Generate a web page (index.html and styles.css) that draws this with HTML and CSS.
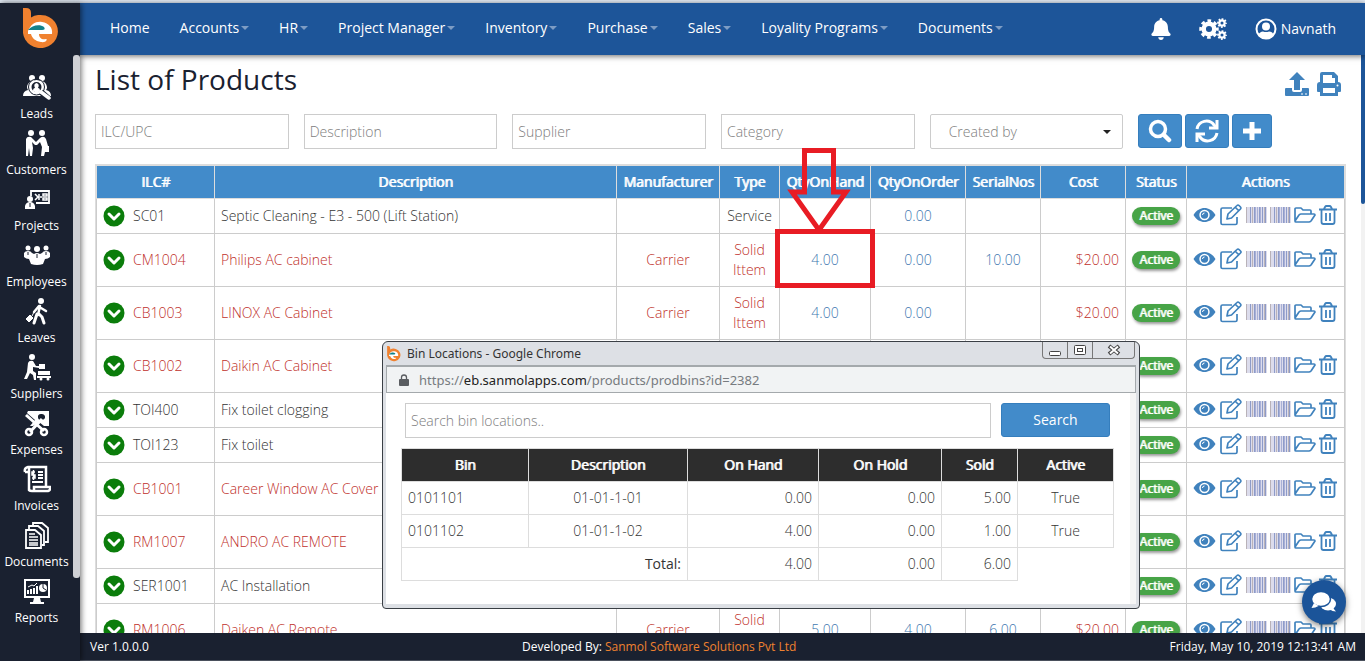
FILE: index.html
```
<!DOCTYPE html>
<html lang="en">
<head>
<meta charset="utf-8">
<title>List of Products</title>
<link rel="stylesheet" href="styles.css">
</head>
<body>
<svg class="sprite" aria-hidden="true">
  <symbol id="logo" viewBox="0 0 36 42">
    <path fill="#f0812f" d="M0 0h3q5 0 5 5v4.500A17.500 16.500 0 1 1 0 25z"/>
    <path fill="#fff" fill-rule="evenodd" d="M5 23C8 16 13 13 19 14C26 15 30 20 29 26H16C16 30 19 32 23 31C25 31 23 35 18 34C12 33 9 30 8 26H5z"/>
    <path fill="#12818a" d="M5 22C9 17 17 16 21 19Q23 22 19 22z"/>
  </symbol>
  <symbol id="check" viewBox="0 0 22 22"><circle cx="11" cy="11" r="10.500" fill="#0b7d0b"/><path d="M6 9l5 5 5-5" fill="none" stroke="#fff" stroke-width="3" stroke-linecap="round" stroke-linejoin="round"/></symbol>
  <symbol id="eye" viewBox="0 0 22 16"><path fill="currentColor" fill-rule="evenodd" d="M0 8C3 3 7 1 11 1s8 2 11 7c-3 5-7 7-11 7S3 13 0 8zM11 2.800a5.200 5.200 0 1 0 0 10.400a5.200 5.200 0 1 0 0-10.400z"/><circle cx="11" cy="8" r="3.700" fill="currentColor"/><path d="M9 8q0-2 2-2" stroke="#fff" fill="none"/></symbol>
  <symbol id="edit" viewBox="0 0 22 22"><g fill="none" stroke="currentColor" stroke-width="1.700" stroke-linejoin="round"><path d="M12 4H2.500q-1.500 0-1.500 1.500v13.500q0 1.500 1.500 1.500h13q1.500 0 1.500-1.500v-6"/><path d="M7 15l1-5 9-8.500q1-1 2 0l1.500 1.500q1 1 0 2l-9 9zM15.500 3.500l3.500 3.500"/></g></symbol>
  <symbol id="barcode" viewBox="0 0 21 16"><path fill="#dcdcec" d="M0 0h21v16H0z"/><g stroke="#8d9bc9"><path d="M4.500 0v16M8.500 0v16M13.500 0v16M16.500 0v16M19.500 0v16"/><path stroke="#b9b2b8" d="M.5 0v16M6.500 0v16M18.500 0v16"/><path stroke="#a9b0d6" d="M9.500 0v16M11.500 0v16M14.500 0v16"/></g></symbol>
  <symbol id="folder" viewBox="0 0 22 18"><path fill="none" stroke="currentColor" stroke-width="1.700" stroke-linejoin="round" d="M1 15V3q0-1 1-1h5l2 2h7q1 0 1 1v3M1 15q0 1 1 1h13q1 0 2-1l4-6q0-1-1-1H7q-1 0-2 1z"/></symbol>
  <symbol id="trash" viewBox="0 0 18 20"><path fill="none" stroke="currentColor" stroke-width="1.800" d="M0 4.500h18M2.500 5v12q0 2 2 2h9q2 0 2-2V5M5 4l1-2q.5-1 1.500-1h3q1 0 1.500 1l1 2M7 8v8M11 8v8"/></symbol>
  <symbol id="gear" viewBox="-10 -10 20 20"><circle r="5.300" fill="none" stroke="currentColor" stroke-width="4.500"/><circle r="8" fill="none" stroke="currentColor" stroke-width="3.500" stroke-dasharray="3.500 2.783" stroke-dashoffset="1.750"/></symbol>
  <symbol id="caret" viewBox="0 0 8 4"><path fill="currentColor" d="M0 0h8L4 4z"/></symbol>
</svg>

<div class="app">
  <aside class="sidebar">
    <a class="brand" href="#" aria-label="Home page"><svg><use href="#logo"/></svg></a>
    <nav class="side-scroll" aria-label="Modules">
      <a class="side-link" href="#"><svg viewBox="0 0 28 28"><g fill="currentColor"><circle cx="9" cy="5" r="3"/><circle cx="19" cy="5" r="3"/><path d="M0 23q0-5 5-6-2-3 0-6 1-2 4-3h10q3 1 4 3 2 4 0 6 5 1 5 6H1z"/></g><circle cx="13.500" cy="14" r="6" fill="#1a2130" stroke="#fff" stroke-width="2"/><path d="M10 18q0-3 2-3-2-4 1.500-5 3.500 1 1.500 5 2 0 2 3l-3 2z" fill="currentColor"/><circle cx="13.500" cy="14" r="8" fill="none" stroke="#1a2130" stroke-width="1"/><path d="M18 19l8 7" stroke="#1a2130" stroke-width="6"/><path d="M18 19l8 6" stroke="currentColor" stroke-width="3.500" stroke-linecap="round"/></svg>Leads</a>
      <a class="side-link" href="#"><svg viewBox="0 0 28 28"><g fill="currentColor"><circle cx="8" cy="4" r="3"/><circle cx="19" cy="4" r="3"/><path d="M3 10q1-3 5-2l5 5 4-4q4-3 6 1l2 7h1v6h-4l-1 4h-3l1-9-2-5-3 3h-2L9 13l1 6-1 8H7l-1-8-1 8H3V15z"/></g></svg>Customers</a>
      <a class="side-link" href="#"><svg viewBox="0 0 28 28"><g fill="none" stroke="currentColor"><path stroke-width="1.800" d="M8 11V6h18v12H13"/><path stroke-width="1.500" d="M12 9l3 3-3 3M17 12h2M20 9h4v2h-4zM20 13h4v2h-4zM16 9v6"/></g><circle cx="7" cy="14" r="3" fill="currentColor"/><path fill="currentColor" d="M2 24v-3q1-4 5-4t5 4v3z"/><path d="M7 18v4" stroke="#1a2130"/></svg>Projects</a>
      <a class="side-link" href="#"><svg viewBox="0 0 28 28"><g fill="currentColor"><circle cx="5" cy="7" r="2.500"/><circle cx="14" cy="8" r="3"/><circle cx="23" cy="7" r="2.500"/><path d="M1 12q1-2 4-2t4 2l2 1q3-2 6 0l2-1q1-2 4-2t4 2v4q-2 2-5 2l-2 5q-6 2-12 0l-2-5q-3 0-5-2z"/></g><path d="M14 13v4M5 11v3M23 11v3" stroke="#1a2130"/></svg>Employees</a>
      <a class="side-link" href="#"><svg viewBox="0 0 28 28"><circle cx="18" cy="4" r="3" fill="currentColor"/><path d="M17 9l-2 9M16 9l-5 6M18 11l5 3" fill="none" stroke="currentColor" stroke-width="2.500" stroke-linecap="round"/><path d="M14 17l-3 9M16 17l3 3 2 6" fill="none" stroke="currentColor" stroke-width="3" stroke-linecap="round" stroke-linejoin="round"/><path d="M3 22l4-4 3 3-4 4zM9 19l2-4" fill="currentColor" stroke="currentColor"/></svg>Leaves</a>
      <a class="side-link" href="#"><svg viewBox="0 0 28 28"><g fill="currentColor"><circle cx="9" cy="4" r="3"/><path d="M5 10q1-3 5-2l3 5h3v2l-6-1v4l3 2v7h-2l-1-5-3-2-3 6H1l3-7zM16 11h6v5h-6zM15 18h12v4H15z"/></g><path d="M14 24h14" stroke="currentColor" stroke-width="2"/><circle cx="18" cy="26" r="1.500" fill="currentColor"/><circle cx="25" cy="26" r="1.500" fill="currentColor"/></svg>Suppliers</a>
      <a class="side-link" href="#"><svg viewBox="0 0 28 28"><path fill="currentColor" fill-rule="evenodd" d="M5 2h21v15h-5l-5-4-6 4H7l5-6-8-7zM18 5a3.500 3 0 1 0 1 6 3.500 3 0 0 0-1-6z"/><path d="M3 6l18 16M19 10L7 23" stroke="currentColor" stroke-width="3"/><g fill="none" stroke="currentColor" stroke-width="2.500"><circle cx="6" cy="23" r="3"/><circle cx="21" cy="23" r="3"/></g></svg>Expenses</a>
      <a class="side-link" href="#"><svg viewBox="0 0 28 28"><g fill="none" stroke="currentColor" stroke-width="2"><path d="M2 7q-1-4 3-5h18v20M6 3v22q1 1 3 1h16q3-1 2-4H11v3M2 7h4" stroke-width="2.500"/><path d="M15 7h5M15 10h5M15 13h5M9 17h11"/><path stroke-width="1.500" d="M12 7H9v3h3v3H9M10.500 5v10"/></g></svg>Invoices</a>
      <a class="side-link" href="#"><svg viewBox="0 0 28 28"><g fill="none" stroke="currentColor" stroke-width="1.800"><path d="M3 9h9l6 5v13H3z"/><path d="M6 8V5h9l6 5v14h-2M10 4V2h9l6 5v14h-3"/><path stroke-width="1.500" d="M6 13h6M6 16h9M6 19h9M6 22h9M6 24h9"/></g></svg>Documents</a>
      <a class="side-link" href="#"><svg viewBox="0 0 28 28"><path fill="none" stroke="currentColor" stroke-width="2" d="M2 3h24v17H2z"/><path fill="currentColor" d="M11 21h6l1 4h3v2H7v-2h3z"/><circle cx="20" cy="11" r="4" fill="currentColor"/><path d="M20 7v4l3 2" stroke="#1a2130" fill="none"/><path d="M5 17v-4M8 17v-5M11 17v-6M14 17V9" stroke="currentColor" stroke-width="2"/><path d="M5 10l4-2 2 1 3-3" stroke="currentColor" fill="none"/></svg>Reports</a>
    </nav>
  </aside>

  <header class="topbar">
    <nav class="menu" aria-label="Main">
      <a href="#">Home</a>
      <a href="#">Accounts<svg><use href="#caret"/></svg></a>
      <a href="#">HR<svg><use href="#caret"/></svg></a>
      <a href="#">Project Manager<svg><use href="#caret"/></svg></a>
      <a href="#">Inventory<svg><use href="#caret"/></svg></a>
      <a href="#">Purchase<svg><use href="#caret"/></svg></a>
      <a href="#">Sales<svg><use href="#caret"/></svg></a>
      <a href="#">Loyality Programs<svg><use href="#caret"/></svg></a>
      <a href="#">Documents<svg><use href="#caret"/></svg></a>
    </nav>
    <div class="account">
      <button class="plain" aria-label="Notifications"><svg class="i-bell" viewBox="0 0 448 512"><path fill="currentColor" d="M224 512c35 0 64-29 64-64H160c0 35 29 64 64 64zm215-150c-19-20-55-52-55-154 0-78-54-140-128-155V32c0-18-14-32-32-32s-32 14-32 32v21C118 68 64 130 64 208c0 102-36 134-55 154-6 7-9 14-9 22 0 16 13 32 32 32h384c19 0 32-16 32-32 0-8-3-15-9-22z"/></svg></button>
      <button class="plain" aria-label="Settings"><svg class="i-cogs" viewBox="0 0 28 22"><use href="#gear" x="0" y="1" width="20" height="20"/><use href="#gear" x="18" y="0" width="10" height="10"/><use href="#gear" x="18" y="12" width="10" height="10"/></svg></button>
      <button class="plain user"><svg viewBox="0 0 22 22"><circle cx="11" cy="11" r="9.500" fill="none" stroke="currentColor" stroke-width="2"/><circle cx="11" cy="8.500" r="4" fill="currentColor"/><path fill="currentColor" d="M3 17q2-3.500 5-3.500q3 1 6 0 3 0 5 3.500-3 4-8 4t-8-4z"/></svg>Navnath</button>
    </div>
  </header>

  <main class="content">
    <div class="title-row">
      <h1>List of Products</h1>
      <div class="tools">
        <button class="plain" aria-label="Upload"><svg viewBox="0 0 24 24"><path fill="currentColor" d="M12 0l8 8h-5v10H9V8H4z"/><path fill="currentColor" d="M1 16h6v2q0 2 2 2h6q2 0 2-2v-2h6q1 0 1 1v6q0 1-1 1H1q-1 0-1-1v-6q0-1 1-1z"/><path d="M16 22h2M20 22h2" stroke="#fff"/></svg></button>
        <button class="plain" aria-label="Print"><svg viewBox="0 0 24 24"><path fill="currentColor" fill-rule="evenodd" d="M3 2q0-2 2-2h12l4 4v6q3 0 3 3v6q0 1-1 1h-2v4H3v-4H1q-1 0-1-1v-6q0-3 3-3zM6 3v8h12V6h-3V3zM6 16v5h12v-5z"/><circle cx="20.500" cy="13.500" r="1" fill="#fff"/></svg></button>
      </div>
    </div>
    <form class="filters">
      <input type="text" placeholder="ILC/UPC" aria-label="ILC/UPC">
      <input type="text" placeholder="Description" aria-label="Description">
      <input type="text" placeholder="Supplier" aria-label="Supplier">
      <input type="text" placeholder="Category" aria-label="Category">
      <div class="select"><select aria-label="Created by"><option>Created by</option></select><svg><use href="#caret"/></svg></div>
      <div class="buttons">
        <button type="button" class="btn" aria-label="Search"><svg viewBox="0 0 24 24"><circle cx="10" cy="10" r="7.500" fill="none" stroke="currentColor" stroke-width="3.500"/><path d="M16 16l5 5" stroke="currentColor" stroke-width="4.500" stroke-linecap="round"/></svg></button>
        <button type="button" class="btn" aria-label="Refresh"><svg viewBox="0 0 24 24"><g fill="none" stroke="currentColor" stroke-width="3"><path d="M2 10A9.500 9.500 0 0 1 19 6l2 2M22 14A9.500 9.500 0 0 1 5 18l-2-2"/><path d="M22 1v8h-8M2 23v-8h8"/></g></svg></button>
        <button type="button" class="btn" aria-label="Add"><svg class="i-plus" viewBox="0 0 20 20"><path d="M10 1v18M1 10h18" stroke="currentColor" stroke-width="5"/></svg></button>
      </div>
    </form>

    <table class="products">
      <colgroup><col class="w-ilc"><col><col class="w-man"><col class="w-type"><col class="w-hand"><col class="w-order"><col class="w-serial"><col class="w-cost"><col class="w-status"><col class="w-actions"></colgroup>
      <thead><tr><th>ILC#</th><th>Description</th><th>Manufacturer</th><th>Type</th><th>QtyOnHand</th><th>QtyOnOrder</th><th>SerialNos</th><th>Cost</th><th>Status</th><th>Actions</th></tr></thead>
      <tbody>
        <tr><td><div class="ilc"><svg><use href="#check"/></svg>SC01</div></td><td>Septic Cleaning - E3 - 500 (Lift Station)</td><td></td><td class="mid">Service</td><td></td><td class="mid"><a href="#">0.00</a></td><td></td><td></td><td><span class="badge">Active</span></td><td><div class="actions"><svg class="i-eye"><use href="#eye"/></svg><svg class="i-edit"><use href="#edit"/></svg><svg class="i-bar"><use href="#barcode"/></svg><svg class="i-bar"><use href="#barcode"/></svg><svg class="i-folder"><use href="#folder"/></svg><svg class="i-trash"><use href="#trash"/></svg></div></td></tr>
        <tr class="solid"><td><div class="ilc"><svg><use href="#check"/></svg>CM1004</div></td><td>Philips AC cabinet</td><td class="mid">Carrier</td><td class="mid">Solid Ittem</td><td class="mid marked"><a href="#">4.00</a><span class="mark"><svg class="arrow" viewBox="0 0 64 87"><path fill="none" stroke="#e81c24" stroke-width="5" d="M17.500 45V3.500h29V45H59L32 83 5 45z"/></svg></span></td><td class="mid"><a href="#">0.00</a></td><td class="mid"><a href="#">10.00</a></td><td class="end">$20.00</td><td><span class="badge">Active</span></td><td><div class="actions"><svg class="i-eye"><use href="#eye"/></svg><svg class="i-edit"><use href="#edit"/></svg><svg class="i-bar"><use href="#barcode"/></svg><svg class="i-bar"><use href="#barcode"/></svg><svg class="i-folder"><use href="#folder"/></svg><svg class="i-trash"><use href="#trash"/></svg></div></td></tr>
        <tr class="solid"><td><div class="ilc"><svg><use href="#check"/></svg>CB1003</div></td><td>LINOX AC Cabinet</td><td class="mid">Carrier</td><td class="mid">Solid Ittem</td><td class="mid"><a href="#">4.00</a></td><td class="mid"><a href="#">0.00</a></td><td></td><td class="end">$20.00</td><td><span class="badge">Active</span></td><td><div class="actions"><svg class="i-eye"><use href="#eye"/></svg><svg class="i-edit"><use href="#edit"/></svg><svg class="i-bar"><use href="#barcode"/></svg><svg class="i-bar"><use href="#barcode"/></svg><svg class="i-folder"><use href="#folder"/></svg><svg class="i-trash"><use href="#trash"/></svg></div></td></tr>
        <tr class="solid"><td><div class="ilc"><svg><use href="#check"/></svg>CB1002</div></td><td>Daikin AC Cabinet</td><td></td><td></td><td></td><td></td><td></td><td></td><td><span class="badge">Active</span></td><td><div class="actions"><svg class="i-eye"><use href="#eye"/></svg><svg class="i-edit"><use href="#edit"/></svg><svg class="i-bar"><use href="#barcode"/></svg><svg class="i-bar"><use href="#barcode"/></svg><svg class="i-folder"><use href="#folder"/></svg><svg class="i-trash"><use href="#trash"/></svg></div></td></tr>
        <tr><td><div class="ilc"><svg><use href="#check"/></svg>TOI400</div></td><td>Fix toilet clogging</td><td></td><td></td><td></td><td></td><td></td><td></td><td><span class="badge">Active</span></td><td><div class="actions"><svg class="i-eye"><use href="#eye"/></svg><svg class="i-edit"><use href="#edit"/></svg><svg class="i-bar"><use href="#barcode"/></svg><svg class="i-bar"><use href="#barcode"/></svg><svg class="i-folder"><use href="#folder"/></svg><svg class="i-trash"><use href="#trash"/></svg></div></td></tr>
        <tr><td><div class="ilc"><svg><use href="#check"/></svg>TOI123</div></td><td>Fix toilet</td><td></td><td></td><td></td><td></td><td></td><td></td><td><span class="badge">Active</span></td><td><div class="actions"><svg class="i-eye"><use href="#eye"/></svg><svg class="i-edit"><use href="#edit"/></svg><svg class="i-bar"><use href="#barcode"/></svg><svg class="i-bar"><use href="#barcode"/></svg><svg class="i-folder"><use href="#folder"/></svg><svg class="i-trash"><use href="#trash"/></svg></div></td></tr>
        <tr class="solid"><td><div class="ilc"><svg><use href="#check"/></svg>CB1001</div></td><td>Career Window AC Cover</td><td></td><td></td><td></td><td></td><td></td><td></td><td><span class="badge">Active</span></td><td><div class="actions"><svg class="i-eye"><use href="#eye"/></svg><svg class="i-edit"><use href="#edit"/></svg><svg class="i-bar"><use href="#barcode"/></svg><svg class="i-bar"><use href="#barcode"/></svg><svg class="i-folder"><use href="#folder"/></svg><svg class="i-trash"><use href="#trash"/></svg></div></td></tr>
        <tr class="solid"><td><div class="ilc"><svg><use href="#check"/></svg>RM1007</div></td><td>ANDRO AC REMOTE</td><td></td><td></td><td></td><td></td><td></td><td></td><td><span class="badge">Active</span></td><td><div class="actions"><svg class="i-eye"><use href="#eye"/></svg><svg class="i-edit"><use href="#edit"/></svg><svg class="i-bar"><use href="#barcode"/></svg><svg class="i-bar"><use href="#barcode"/></svg><svg class="i-folder"><use href="#folder"/></svg><svg class="i-trash"><use href="#trash"/></svg></div></td></tr>
        <tr><td><div class="ilc"><svg><use href="#check"/></svg>SER1001</div></td><td>AC Installation</td><td></td><td></td><td></td><td></td><td></td><td></td><td><span class="badge">Active</span></td><td><div class="actions"><svg class="i-eye"><use href="#eye"/></svg><svg class="i-edit"><use href="#edit"/></svg><svg class="i-bar"><use href="#barcode"/></svg><svg class="i-bar"><use href="#barcode"/></svg><svg class="i-folder"><use href="#folder"/></svg><svg class="i-trash"><use href="#trash"/></svg></div></td></tr>
        <tr class="solid"><td><div class="ilc"><svg><use href="#check"/></svg>RM1006</div></td><td>Daiken AC Remote</td><td class="mid">Carrier</td><td class="mid">Solid Ittem</td><td class="mid"><a href="#">5.00</a></td><td class="mid"><a href="#">4.00</a></td><td class="mid"><a href="#">6.00</a></td><td class="end">$20.00</td><td><span class="badge">Active</span></td><td><div class="actions"><svg class="i-eye"><use href="#eye"/></svg><svg class="i-edit"><use href="#edit"/></svg><svg class="i-bar"><use href="#barcode"/></svg><svg class="i-bar"><use href="#barcode"/></svg><svg class="i-folder"><use href="#folder"/></svg><svg class="i-trash"><use href="#trash"/></svg></div></td></tr>
      </tbody>
    </table>
  </main>

  <footer class="footer">
    <span>Ver 1.0.0.0</span>
    <span>Developed By: <a href="#">Sanmol Software Solutions Pvt Ltd</a></span>
    <span>Friday, May 10, 2019 12:13:41 AM</span>
  </footer>
</div>

<section class="popup" aria-label="Bin Locations">
  <div class="popup-title">
    <svg class="i-logo"><use href="#logo"/></svg><span>Bin Locations - Google Chrome</span>
    <div class="win-buttons">
      <button aria-label="Minimize"><svg viewBox="0 0 14 12"><rect x="1.500" y="7.500" width="11" height="4" rx="1" fill="#fff" stroke="#444"/></svg></button>
      <button aria-label="Maximize"><svg viewBox="0 0 14 12"><rect x="1.500" y="1.500" width="11" height="9" rx="1" fill="#fff" stroke="#444"/><rect x="4.500" y="4.500" width="5" height="3" fill="#fff" stroke="#444"/></svg></button>
      <button class="close" aria-label="Close"><svg viewBox="0 0 14 12"><path d="M2 2l10 8M12 2L2 10" stroke="#444" stroke-width="4"/><path d="M3 2.500l8 7M11 2.500l-8 7" stroke="#fff" stroke-width="2"/></svg></button>
    </div>
  </div>
  <div class="address"><svg viewBox="0 0 10 12"><path fill="#5a5d61" d="M1 5h8q1 0 1 1v5q0 1-1 1H1q-1 0-1-1V6q0-1 1-1z"/><path d="M2.500 5V3.500a2.500 2.500 0 0 1 5 0V5" fill="none" stroke="#5a5d61" stroke-width="1.300"/></svg><span>https://<b>eb.sanmolapps.com</b>/products/prodbins?id=2382</span></div>
  <div class="popup-body">
    <form class="bin-search">
      <input type="text" placeholder="Search bin locations.." aria-label="Search bin locations">
      <button type="button" class="btn">Search</button>
    </form>
    <table class="bins">
      <colgroup><col class="b-bin"><col><col class="b-hand"><col class="b-hold"><col class="b-sold"><col class="b-active"></colgroup>
      <thead><tr><th>Bin</th><th>Description</th><th>On Hand</th><th>On Hold</th><th>Sold</th><th>Active</th></tr></thead>
      <tbody>
        <tr><td>0101101</td><td class="mid">01-01-1-01</td><td class="end">0.00</td><td class="end">0.00</td><td class="end">5.00</td><td class="mid">True</td></tr>
        <tr><td>0101102</td><td class="mid">01-01-1-02</td><td class="end">4.00</td><td class="end">0.00</td><td class="end">1.00</td><td class="mid">True</td></tr>
        <tr><td class="end total" colspan="2">Total:</td><td class="end">4.00</td><td class="end">0.00</td><td class="end">6.00</td><td class="blank"></td></tr>
      </tbody>
    </table>
  </div>
</section>
<button class="chat" aria-label="Chat"><svg viewBox="0 0 26 22"><ellipse cx="17" cy="13" rx="8" ry="6.500" fill="currentColor"/><path fill="currentColor" d="M22 17l3 3.500q-4 0-6-2z"/><ellipse cx="10" cy="8" rx="9.500" ry="7.500" fill="currentColor" stroke="#1b5499" stroke-width="1.500"/><path fill="currentColor" d="M3 12l-2.500 5q4 0 7-2z"/></svg></button>
</body>
</html>
```
FILE: styles.css
```
* { box-sizing: border-box; }
body { margin: 0; height: 100vh; overflow: hidden; background: #fff; color: #333; font: 300 14px/20px "Open Sans", "Noto Sans", sans-serif; }
a { color: #4178b0; text-decoration: none; }
button, input, select { font: inherit; color: inherit; margin: 0; }
svg { display: block; flex: none; }
.sprite { position: absolute; width: 0; height: 0; }

.app { display: grid; grid-template: 52px 1fr 28px / 80px 1fr; height: 100vh; border-top: 3px solid #e3ebf5; }

.sidebar { grid-row: 1 / 4; z-index: 3; background: #1a2130; box-shadow: 1px 0 6px rgba(0, 0, 0, .6); }
.brand { display: flex; height: 52px; padding: 5px 0 0 23px; }
.brand svg { width: 36px; height: 42px; }
.side-scroll { position: relative; padding: 18px 7px 0 0; }
.side-scroll::after { content: ""; position: absolute; top: 0; right: 0; width: 7px; height: 523px; border-radius: 3px; background: #cfd0d4; }
.side-link { display: flex; flex-direction: column; align-items: center; gap: 4px; height: 56px; color: #fff; font-size: 12px; line-height: 18px; font-weight: 400; }
.side-link svg { width: 28px; height: 28px; }

.topbar { display: flex; align-items: center; justify-content: space-between; z-index: 2; padding: 0 29px 0 30px; background: #1d5599; color: #fff; box-shadow: 0 1px 6px rgba(0, 0, 0, .6); font-weight: 400; }
.menu { display: flex; gap: 30px; padding-bottom: 2px; }
.menu a { display: flex; align-items: center; gap: 2px; color: #fff; }
.menu svg { width: 8px; height: 4px; color: #7d9cc4; }
.account { display: flex; align-items: center; gap: 28px; }
.plain { display: flex; align-items: center; padding: 0; border: 0; background: none; }
.i-bell { width: 20px; height: 22px; }
.i-cogs { width: 28px; height: 22px; }
.user { gap: 4px; }
.user svg { width: 22px; height: 22px; }

.content { position: relative; min-width: 0; min-height: 0; overflow: hidden; padding: 7px 20px 0 15px; }
.content::before { content: ""; position: absolute; top: 0; right: 0; bottom: 0; width: 4px; background: #f2f2f2; }
.content::after { content: ""; position: absolute; top: 0; right: 0; width: 4px; height: 149px; border-radius: 0 0 3px 3px; background: #1d5599; }
.title-row { display: flex; align-items: center; justify-content: space-between; height: 34px; padding-right: 4px; }
h1 { margin: 0; font-size: 28px; line-height: 34px; font-weight: 400; color: #1a2130; }
.tools { display: flex; gap: 8px; padding-top: 9px; color: #4082bd; }
.tools svg { width: 24px; height: 24px; }

.filters { display: grid; grid-template-columns: repeat(6, 1fr); gap: 15px; margin: 18px 13px 16px 0; }
input, select { width: 100%; height: 35px; border: 1px solid #ccc; background: #fff; padding: 0 5px; border-radius: 0; outline: 0; }
input::placeholder { color: #7d7d7d; opacity: 1; }
.select { position: relative; }
.select select { appearance: none; padding: 0 18px; color: #7d7d7d; border-radius: 2px; }
.select svg { position: absolute; right: 12px; top: 16px; width: 8px; height: 4px; color: #222; }
.buttons { display: flex; gap: 3px; }
.btn { display: flex; align-items: center; justify-content: center; height: 34px; padding: 0 9px; border: 1px solid #357ebd; border-radius: 3px; background: #428bca; color: #fff; font-weight: 400; }
.btn svg { width: 24px; height: 24px; }
.btn .i-plus { width: 20px; height: 20px; }

table { width: 100%; border-collapse: collapse; table-layout: fixed; }
th { padding: 0; border: 1px solid #ddd; color: #fff; font-weight: 400; text-shadow: 1px 0 0 currentColor; }
td { padding: 0 6px; border: 1px solid #ccc; font-weight: 350; }
.mid { text-align: center; }
.end { text-align: right; }
.products { width: calc(100% - 1px); margin-left: 1px; outline: 1px solid #ddd; }
.products th { height: 33px; background: #428bca; }
.products td { height: 35px; }
.products .solid td { height: 53px; }
.w-ilc { width: 118px; } .w-man { width: 103px; } .w-type { width: 60px; } .w-hand { width: 91px; } .w-order { width: 95px; }
.w-serial { width: 75px; } .w-cost { width: 85px; } .w-status { width: 61px; } .w-actions { width: 158px; }
.solid { color: #c0302b; }
.ilc { display: flex; align-items: center; gap: 8px; }
.ilc svg { width: 22px; height: 22px; }
.badge { display: block; width: 48px; height: 18px; border-radius: 9px; background: #47a447; color: #fff; font-size: 12px; line-height: 18px; font-weight: 400; text-align: center; text-shadow: 1px 0 0 currentColor; box-shadow: 1px 2px 3px rgba(0, 0, 0, .4); }
.actions { display: flex; align-items: center; gap: 3px; padding-bottom: 2px; color: #4082bd; }
.i-eye { width: 23px; height: 16px; } .i-edit { width: 24px; height: 22px; } .i-bar { width: 21px; height: 16px; } .i-folder { width: 22px; height: 18px; } .i-trash { width: 18px; height: 20px; }
.marked { position: relative; }
.mark { position: absolute; inset: -5px -5px -2px -5px; border: 5px solid #e81c24; }
.arrow { position: absolute; left: 7px; bottom: 100%; width: 64px; height: 87px; }

.footer { display: flex; align-items: center; justify-content: space-between; z-index: 2; padding: 0 9px 0 10px; background: #1a2130; border-bottom: 1px solid #4a505c; color: #fff; font-size: 12px; font-weight: 400; }
.footer a { color: #f0812f; }

.popup { position: absolute; z-index: 5; left: 382px; top: 341px; width: 758px; padding: 0 3px 4px; border: 1px solid #3a3f45; border-radius: 6px 6px 4px 4px; background: #dde0e5; }
.popup-title { display: flex; align-items: center; gap: 6px; height: 23px; padding: 0 1px; color: #333; font: 400 12px/20px "Noto Sans", sans-serif; }
.i-logo { width: 14px; height: 16px; }
.win-buttons { display: flex; align-self: flex-start; height: 17px; margin-left: auto; border: 1px solid #777; border-top: 0; border-radius: 0 0 4px 4px; }
.win-buttons button { display: flex; align-items: center; justify-content: center; width: 25px; padding: 0; border: 0; border-right: 1px solid #777; background: none; }
.win-buttons .close { width: 41px; border-right: 0; }
.win-buttons svg { width: 14px; height: 12px; }
.address { display: flex; align-items: center; gap: 10px; height: 28px; padding: 0 12px; border: 1px solid #a4a9ac; border-top-width: 2px; background: #f1f3f4; color: #777b80; font: 400 13px/20px "Noto Sans", sans-serif; }
.address svg { width: 10px; height: 12px; }
.address b { color: #222; font-weight: 400; }
.popup-body { padding: 10px 16px 23px 15px; border-right: 6px solid #f5f5f5; background: #fff; }
.bin-search { display: flex; gap: 10px; margin: 0 4px 10px; }
.bin-search .btn { flex: none; width: 109px; }
.bins { border: 0; }
.bins th { height: 33px; background: #2d2d2d; }
.bins td { height: 33px; border-color: #ddd; }
.b-bin { width: 127px; } .b-hand { width: 131px; } .b-hold { width: 123px; } .b-sold { width: 76px; } .b-active { width: 96px; }
.bins .total { font-weight: 400; }
.bins .blank { border-right: 0; border-bottom: 0; }

.chat { position: absolute; z-index: 6; right: 19px; bottom: 37px; display: flex; align-items: center; justify-content: center; width: 44px; height: 44px; padding: 0; border: 0; border-radius: 50%; background: #1b5499; color: #fff; box-shadow: 0 2px 6px rgba(0, 0, 0, .5); }
.chat svg { width: 26px; height: 22px; }
```
